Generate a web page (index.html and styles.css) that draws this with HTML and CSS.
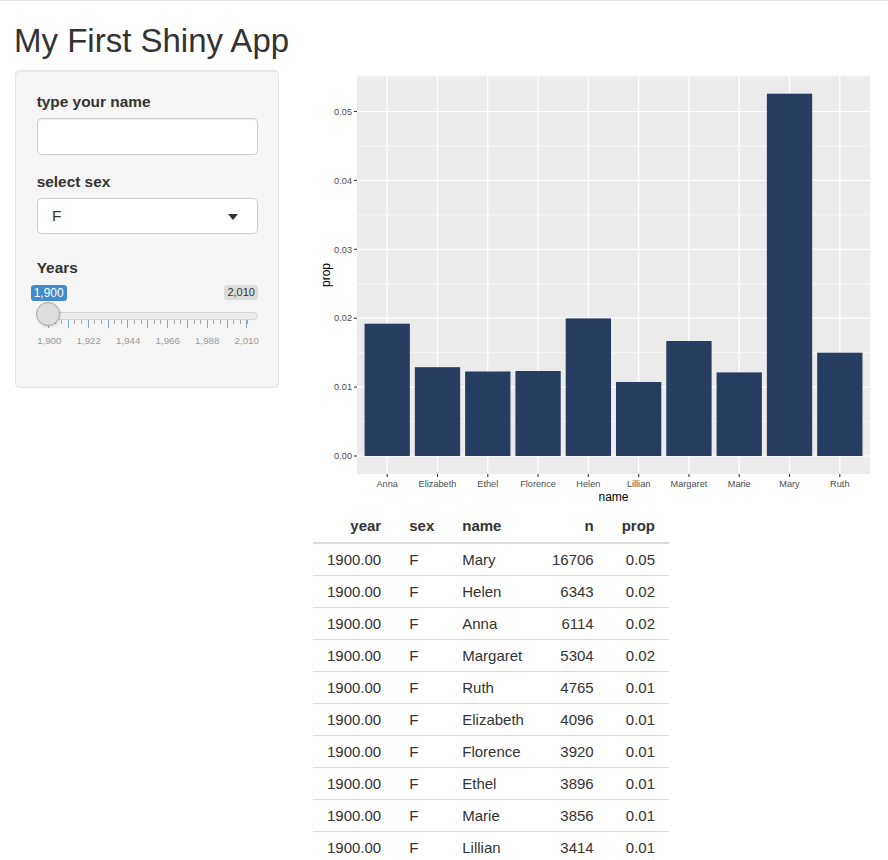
FILE: index.html
```html
<!DOCTYPE html>
<html>
<head>
<meta charset="utf-8">
<title>My First Shiny App</title>
<link rel="stylesheet" href="styles.css">
</head>
<body>
<div class="page">
  <h2 class="title">My First Shiny App</h2>
  <div class="layout">
    <div class="sidebar well">
      <div class="form-group">
        <label class="control-label">type your name</label>
        <div class="text-input"></div>
      </div>
      <div class="form-group select-group">
        <label class="control-label">select sex</label>
        <div class="select-input"><span>F</span><span class="caret"></span></div>
      </div>
      <div class="form-group slider-group">
        <label class="control-label">Years</label>
        <div class="irs">
          <span class="irs-line"></span>
          <span class="irs-max">2,010</span>
          <span class="irs-from">1,900</span>
          <span class="irs-grid-small"></span>
          <span class="irs-grid-big"></span>
          <div class="irs-grid-text">
            <span>1,900</span><span>1,922</span><span>1,944</span><span>1,966</span><span>1,988</span><span>2,010</span>
          </div>
          <span class="irs-handle"></span>
        </div>
      </div>
    </div>
    <div class="main">
      <svg class="plot" width="565" height="440" viewBox="313 70 565 440">
        <rect x="357" y="75.8" width="513" height="398.2" fill="#ebebeb"/>
        <g stroke="#ffffff" stroke-width="0.6">
          <line x1="357" x2="870" y1="421.55" y2="421.55"/>
          <line x1="357" x2="870" y1="352.65" y2="352.65"/>
          <line x1="357" x2="870" y1="283.75" y2="283.75"/>
          <line x1="357" x2="870" y1="214.85" y2="214.85"/>
          <line x1="357" x2="870" y1="145.95" y2="145.95"/>
          <line x1="357" x2="870" y1="77.05" y2="77.05"/>
        </g>
        <g stroke="#ffffff" stroke-width="1.2">
          <line x1="357" x2="870" y1="456" y2="456"/>
          <line x1="357" x2="870" y1="387.1" y2="387.1"/>
          <line x1="357" x2="870" y1="318.2" y2="318.2"/>
          <line x1="357" x2="870" y1="249.3" y2="249.3"/>
          <line x1="357" x2="870" y1="180.4" y2="180.4"/>
          <line x1="357" x2="870" y1="111.5" y2="111.5"/>
          <line y1="75.8" y2="474" x1="387.2" x2="387.2"/>
          <line y1="75.8" y2="474" x1="437.49" x2="437.49"/>
          <line y1="75.8" y2="474" x1="487.78" x2="487.78"/>
          <line y1="75.8" y2="474" x1="538.07" x2="538.07"/>
          <line y1="75.8" y2="474" x1="588.36" x2="588.36"/>
          <line y1="75.8" y2="474" x1="638.65" x2="638.65"/>
          <line y1="75.8" y2="474" x1="688.94" x2="688.94"/>
          <line y1="75.8" y2="474" x1="739.23" x2="739.23"/>
          <line y1="75.8" y2="474" x1="789.52" x2="789.52"/>
          <line y1="75.8" y2="474" x1="839.81" x2="839.81"/>
        </g>
        <g fill="#263c61">
          <rect x="364.55" y="323.7" width="45.3" height="132.3"/>
          <rect x="414.84" y="367.2" width="45.3" height="88.8"/>
          <rect x="465.13" y="371.5" width="45.3" height="84.5"/>
          <rect x="515.42" y="371.0" width="45.3" height="85"/>
          <rect x="565.71" y="318.4" width="45.3" height="137.6"/>
          <rect x="616.0" y="382" width="45.3" height="74"/>
          <rect x="666.29" y="341" width="45.3" height="115"/>
          <rect x="716.58" y="372.4" width="45.3" height="83.6"/>
          <rect x="766.87" y="93.7" width="45.3" height="362.3"/>
          <rect x="817.16" y="352.7" width="45.3" height="103.3"/>
        </g>
        <g stroke="#333333" stroke-width="1.1">
          <line x1="354" x2="357" y1="456" y2="456"/>
          <line x1="354" x2="357" y1="387.1" y2="387.1"/>
          <line x1="354" x2="357" y1="318.2" y2="318.2"/>
          <line x1="354" x2="357" y1="249.3" y2="249.3"/>
          <line x1="354" x2="357" y1="180.4" y2="180.4"/>
          <line x1="354" x2="357" y1="111.5" y2="111.5"/>
          <line y1="474" y2="477" x1="387.2" x2="387.2"/>
          <line y1="474" y2="477" x1="437.49" x2="437.49"/>
          <line y1="474" y2="477" x1="487.78" x2="487.78"/>
          <line y1="474" y2="477" x1="538.07" x2="538.07"/>
          <line y1="474" y2="477" x1="588.36" x2="588.36"/>
          <line y1="474" y2="477" x1="638.65" x2="638.65"/>
          <line y1="474" y2="477" x1="688.94" x2="688.94"/>
          <line y1="474" y2="477" x1="739.23" x2="739.23"/>
          <line y1="474" y2="477" x1="789.52" x2="789.52"/>
          <line y1="474" y2="477" x1="839.81" x2="839.81"/>
        </g>
        <g class="axis-text" text-anchor="end">
          <text x="352" y="459.2">0.00</text>
          <text x="352" y="390.3">0.01</text>
          <text x="352" y="321.4">0.02</text>
          <text x="352" y="252.5">0.03</text>
          <text x="352" y="183.6">0.04</text>
          <text x="352" y="114.7">0.05</text>
        </g>
        <g class="axis-text" text-anchor="middle">
          <text x="387.2" y="486.7">Anna</text>
          <text x="437.49" y="486.7">Elizabeth</text>
          <text x="487.78" y="486.7">Ethel</text>
          <text x="538.07" y="486.7">Florence</text>
          <text x="588.36" y="486.7">Helen</text>
          <text x="638.65" y="486.7">Lillian</text>
          <text x="688.94" y="486.7">Margaret</text>
          <text x="739.23" y="486.7">Marie</text>
          <text x="789.52" y="486.7">Mary</text>
          <text x="839.81" y="486.7">Ruth</text>
        </g>
        <text class="axis-title" x="613.5" y="500.7" text-anchor="middle">name</text>
        <text class="axis-title" transform="translate(330 275) rotate(-90)" text-anchor="middle">prop</text>
      </svg>
      <table class="data-table">
        <thead>
          <tr><th class="num">year</th><th>sex</th><th>name</th><th class="num">n</th><th class="num">prop</th></tr>
        </thead>
        <tbody>
          <tr><td class="num">1900.00</td><td>F</td><td>Mary</td><td class="num">16706</td><td class="num">0.05</td></tr>
          <tr><td class="num">1900.00</td><td>F</td><td>Helen</td><td class="num">6343</td><td class="num">0.02</td></tr>
          <tr><td class="num">1900.00</td><td>F</td><td>Anna</td><td class="num">6114</td><td class="num">0.02</td></tr>
          <tr><td class="num">1900.00</td><td>F</td><td>Margaret</td><td class="num">5304</td><td class="num">0.02</td></tr>
          <tr><td class="num">1900.00</td><td>F</td><td>Ruth</td><td class="num">4765</td><td class="num">0.01</td></tr>
          <tr><td class="num">1900.00</td><td>F</td><td>Elizabeth</td><td class="num">4096</td><td class="num">0.01</td></tr>
          <tr><td class="num">1900.00</td><td>F</td><td>Florence</td><td class="num">3920</td><td class="num">0.01</td></tr>
          <tr><td class="num">1900.00</td><td>F</td><td>Ethel</td><td class="num">3896</td><td class="num">0.01</td></tr>
          <tr><td class="num">1900.00</td><td>F</td><td>Marie</td><td class="num">3856</td><td class="num">0.01</td></tr>
          <tr><td class="num">1900.00</td><td>F</td><td>Lillian</td><td class="num">3414</td><td class="num">0.01</td></tr>
        </tbody>
      </table>
    </div>
  </div>
</div>
</body>
</html>
```
FILE: styles.css
```css
html, body {
  margin: 0;
  padding: 0;
}
body {
  font-family: "Liberation Sans", Arial, Helvetica, sans-serif;
  color: #333;
  background: #fff;
  border-top: 1px solid #e4e4e4;
  overflow: hidden;
}
.page {
  padding-left: 15px;
}
.title {
  font-size: 33px;
  font-weight: normal;
  line-height: 1.1;
  margin: 21.6px 0 11px -1px;
  color: #333;
}
.layout {
  display: flex;
  align-items: flex-start;
}
.well {
  box-sizing: border-box;
  width: 264px;
  margin-left: 0.3px;
  padding: 20.4px 20.4px 20.5px 20.4px;
  background: #f5f5f5;
  border: 1px solid #e3e3e3;
  border-radius: 4.4px;
  box-shadow: inset 0 1px 1px rgba(0,0,0,0.05);
}
.form-group {
  margin-bottom: 16px;
}
.control-label {
  display: block;
  font-size: 15.4px;
  font-weight: bold;
  line-height: 22px;
  margin-bottom: 4.6px;
}
.text-input {
  box-sizing: border-box;
  height: 37.4px;
  background: #fff;
  border: 1px solid #ccc;
  border-radius: 4.4px;
  box-shadow: inset 0 1px 1px rgba(0,0,0,0.075);
}
.select-group {
  margin-bottom: 22.6px;
}
.select-input {
  box-sizing: border-box;
  height: 36.6px;
  display: flex;
  align-items: center;
  justify-content: space-between;
  padding: 0 19px 0 14.2px;
  background: #fff;
  border: 1px solid #ccc;
  border-radius: 4.4px;
  font-size: 15.4px;
  color: #333;
}
.caret {
  width: 0;
  height: 0;
  border-style: solid;
  border-width: 6px 5.5px 0 5.5px;
  border-color: #333 transparent transparent transparent;
  margin-top: 1px;
}
.slider-group {
  margin-bottom: 16.5px;
}
.irs {
  position: relative;
  height: 66px;
}
.irs-line {
  position: absolute;
  left: 0;
  right: 0;
  top: 28px;
  height: 8.4px;
  box-sizing: border-box;
  border: 1px solid #d4d4d4;
  background: #ededed;
  border-radius: 8px;
}
.irs-from {
  position: absolute;
  left: -6px;
  top: 1.2px;
  height: 16px;
  line-height: 16px;
  padding: 0 3px;
  font-size: 12px;
  color: #fff;
  background: #428bca;
  border-radius: 3.3px;
}
.irs-max {
  position: absolute;
  right: 0;
  top: 1.4px;
  height: 14.6px;
  line-height: 14.6px;
  padding: 0 3px;
  font-size: 11px;
  color: #333;
  background: rgba(0,0,0,0.1);
  border-radius: 3.3px;
}
.irs-grid-small {
  position: absolute;
  left: 11.8px;
  top: 36.7px;
  width: 199.5px;
  height: 4px;
  background: repeating-linear-gradient(to right, #a8a8a8 0, #a8a8a8 1px, transparent 1px, transparent 6.617px);
}
.irs-grid-big {
  position: absolute;
  left: 11.8px;
  top: 36.7px;
  width: 199.5px;
  height: 7.3px;
  background: repeating-linear-gradient(to right, #7ea7cf 0, #7ea7cf 1px, transparent 1px, transparent 19.85px);
}
.irs-grid-text {
  position: absolute;
  left: 0.45px;
  top: 51.5px;
  width: 221.7px;
  display: flex;
  justify-content: space-between;
  font-size: 9.7px;
  line-height: 11px;
  color: #999;
}
.irs-handle {
  position: absolute;
  left: -0.7px;
  top: 18.4px;
  width: 24px;
  height: 24px;
  box-sizing: border-box;
  border: 1px solid #a8a8a8;
  background: #dedede;
  border-radius: 50%;
  box-shadow: 1px 1px 3px rgba(0,0,0,0.12);
}
.main {
  margin-left: 33.7px;
  width: 565px;
}
.plot {
  display: block;
}
.axis-text {
  font-size: 9.2px;
  fill: #4d4d4d;
}
.axis-title {
  font-size: 12px;
  fill: #000;
}
.data-table {
  border-collapse: collapse;
  font-size: 15px;
  color: #333;
}
.data-table th,
.data-table td {
  padding: 5px 14px;
  line-height: 21px;
  text-align: left;
  white-space: nowrap;
}
.data-table th {
  font-weight: bold;
  padding-bottom: 6px;
  border-bottom: 2px solid #ddd;
}
.data-table td {
  border-top: 1px solid #ddd;
}
.data-table .num {
  text-align: right;
}
```
